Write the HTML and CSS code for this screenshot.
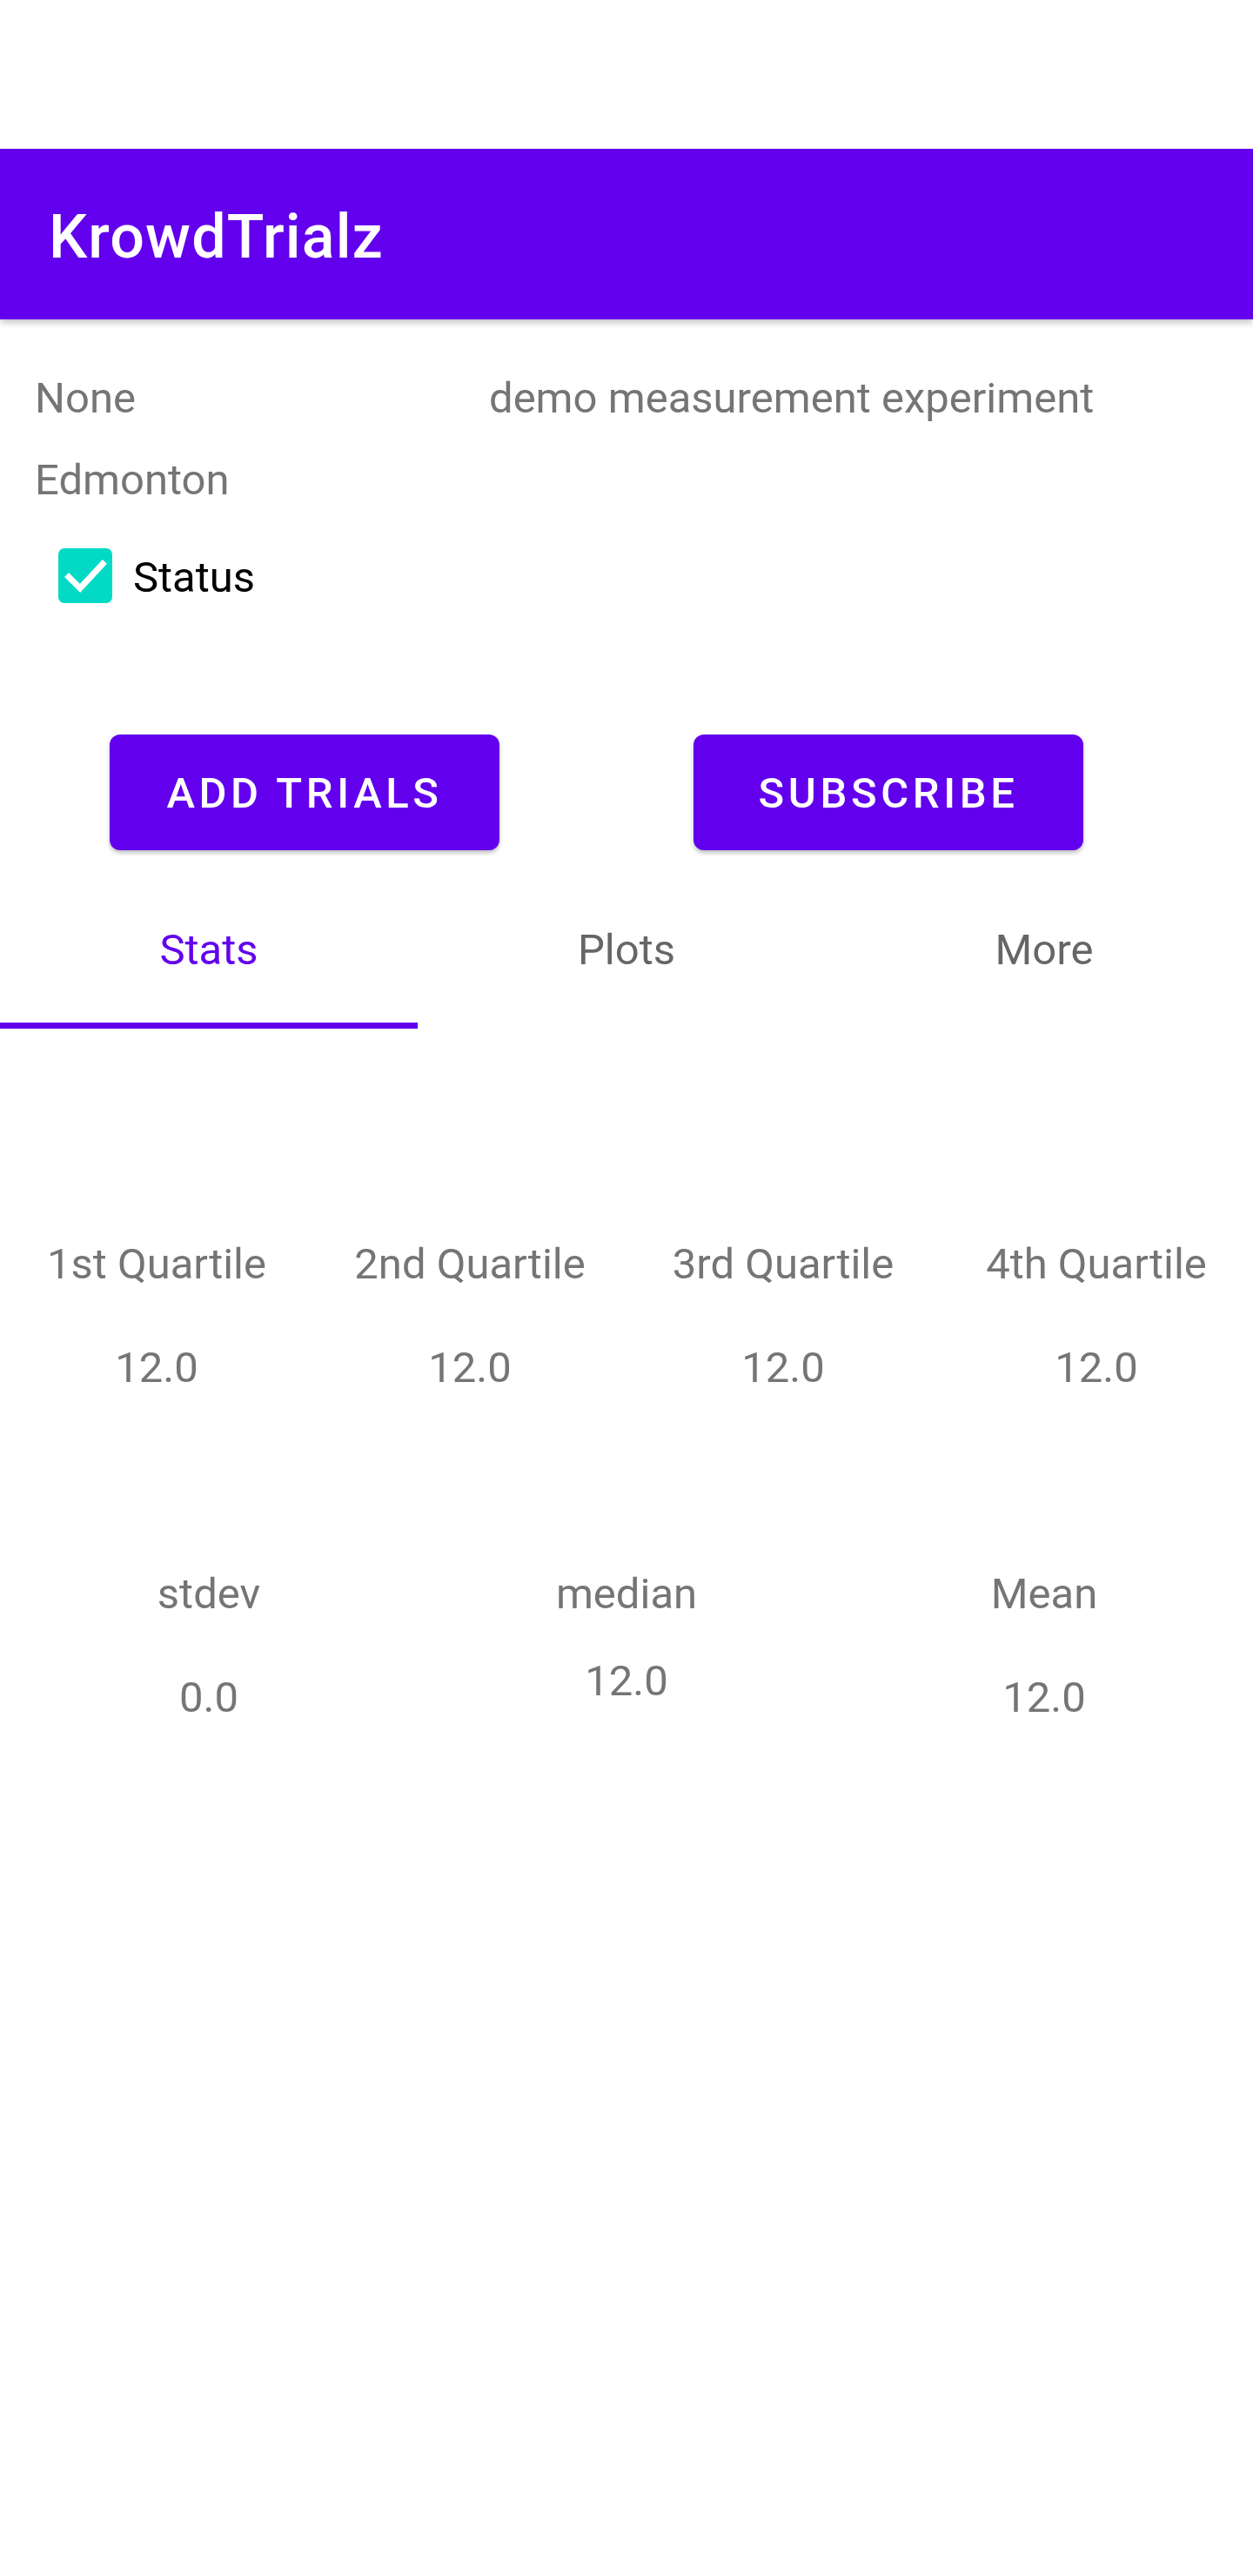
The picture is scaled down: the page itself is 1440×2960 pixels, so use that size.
FILE: index.html
```html
<!DOCTYPE html>
<html lang="en">
<head>
<meta charset="utf-8">
<title>KrowdTrialz</title>
<link rel="stylesheet" href="styles.css">
</head>
<body>
<div class="status-space"></div>
<header class="appbar">
  <h1 class="title">KrowdTrialz</h1>
</header>
<main>
  <section class="info">
    <div class="info-row">
      <span class="info-left">None</span>
      <span class="info-right">demo measurement experiment</span>
    </div>
    <div class="info-row second">
      <span class="info-left">Edmonton</span>
    </div>
    <div class="check-row">
      <span class="checkbox">
        <svg width="62" height="63" viewBox="0 0 62 63">
          <polyline points="12,33 25,46 51,18" fill="none" stroke="#ffffff" stroke-width="7" stroke-linecap="square" stroke-linejoin="miter"/>
        </svg>
      </span>
      <span class="check-label">Status</span>
    </div>
  </section>

  <div class="actions">
    <button class="btn">ADD TRIALS</button>
    <button class="btn">SUBSCRIBE</button>
  </div>

  <nav class="tabs">
    <div class="tab active">Stats</div>
    <div class="tab">Plots</div>
    <div class="tab">More</div>
  </nav>

  <section class="stats">
    <div class="stats-row quartiles">
      <div class="stat"><div class="stat-label">1st Quartile</div><div class="stat-value">12.0</div></div>
      <div class="stat"><div class="stat-label">2nd Quartile</div><div class="stat-value">12.0</div></div>
      <div class="stat"><div class="stat-label">3rd Quartile</div><div class="stat-value">12.0</div></div>
      <div class="stat"><div class="stat-label">4th Quartile</div><div class="stat-value">12.0</div></div>
    </div>
    <div class="stats-row summary">
      <div class="stat"><div class="stat-label">stdev</div><div class="stat-value">0.0</div></div>
      <div class="stat"><div class="stat-label">median</div><div class="stat-value raised">12.0</div></div>
      <div class="stat"><div class="stat-label">Mean</div><div class="stat-value">12.0</div></div>
    </div>
  </section>
</main>
</body>
</html>
```

FILE: styles.css
```css
html, body {
  margin: 0;
  padding: 0;
  background: #ffffff;
}

body {
  font-family: Roboto, "Noto Sans", "Liberation Sans", sans-serif;
  width: 1440px;
  min-height: 2960px;
}

.status-space {
  height: 171px;
}

.appbar {
  position: relative;
  z-index: 2;
  height: 196px;
  box-sizing: border-box;
  background: #6200ee;
  display: flex;
  align-items: center;
  padding: 6px 0 0 56px;
  box-shadow: 0 4px 7px rgba(0, 0, 0, 0.22);
}

.title {
  margin: 0;
  font-size: 70px;
  font-weight: 500;
  line-height: 82px;
  letter-spacing: 1.1px;
  color: #ffffff;
}

.info {
  padding: 62px 40px 0 40px;
}

.info-row {
  display: flex;
  font-size: 49px;
  line-height: 57px;
  color: #757575;
}

.info-row.second {
  margin-top: 37px;
}

.info-left {
  flex: 0 0 522px;
}

.check-row {
  display: flex;
  align-items: center;
  margin-top: 50px;
  padding-left: 27px;
  gap: 24px;
}

.checkbox {
  width: 62px;
  height: 63px;
  border-radius: 7px;
  background: #03dac5;
  display: block;
}

.checkbox svg {
  display: block;
}

.check-label {
  font-size: 49px;
  line-height: 57px;
  color: #000000;
  padding-top: 3px;
}

.actions {
  display: flex;
  margin-top: 151px;
  padding-left: 126px;
  gap: 223px;
}

.btn {
  width: 448px;
  height: 133px;
  border: none;
  border-radius: 12px;
  background: #6200ee;
  color: #ffffff;
  font-family: Roboto, "Noto Sans", "Liberation Sans", sans-serif;
  font-size: 49px;
  font-weight: 500;
  letter-spacing: 4.6px;
  padding: 2px 0 0 0;
  box-shadow: 0 3px 5px rgba(0, 0, 0, 0.25);
}

.tabs {
  display: flex;
  margin-top: 37px;
  height: 168px;
}

.tab {
  position: relative;
  flex: 1 1 0;
  display: flex;
  align-items: center;
  justify-content: center;
  padding-bottom: 14px;
  font-size: 49px;
  line-height: 57px;
  color: #666666;
}

.tab.active {
  color: #6200ee;
}

.tab.active::after {
  content: "";
  position: absolute;
  left: 0;
  right: 0;
  bottom: 0;
  height: 7px;
  background: #6200ee;
}

.stats {
  padding-top: 242px;
}

.stats-row {
  display: grid;
  text-align: center;
  font-size: 49px;
  line-height: 57px;
  color: #757575;
}

.quartiles {
  grid-template-columns: repeat(4, 1fr);
}

.summary {
  grid-template-columns: repeat(3, 1fr);
  margin-top: 203px;
}

.stat-value {
  margin-top: 62px;
}

.summary .stat-value {
  margin-top: 62px;
}

.summary .stat-value.raised {
  margin-top: 43px;
}
```
